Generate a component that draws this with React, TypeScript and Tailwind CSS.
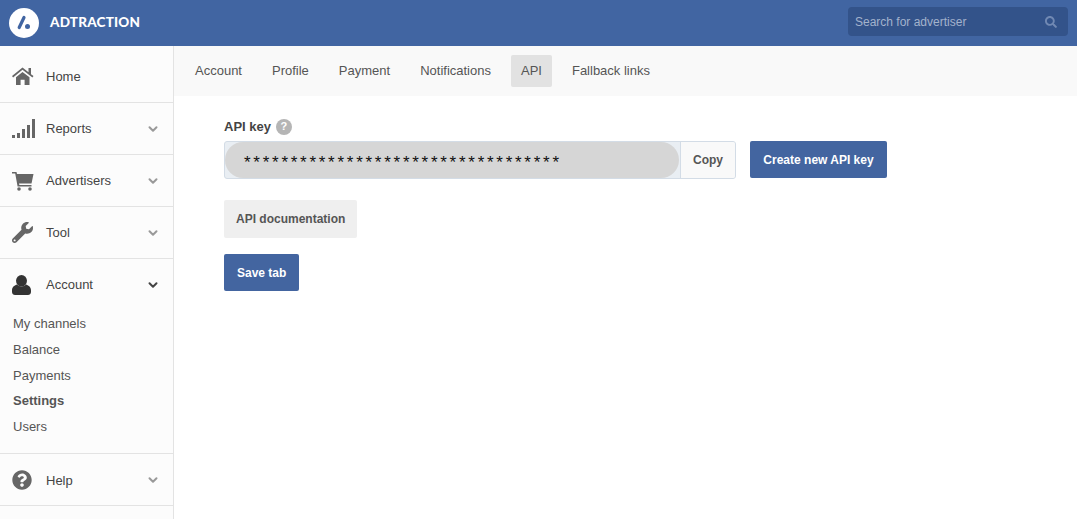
import { FaWrench, FaQuestionCircle, FaSearch } from "react-icons/fa";
import { ChevronDown } from "lucide-react";
import type { ReactNode } from "react";

function SignalIcon() {
  return (
    <svg width="23" height="20" viewBox="0 0 23 20" fill="#666">
      <rect x="0" y="16" width="3" height="3" />
      <rect x="5" y="14" width="3" height="5" />
      <rect x="10" y="10" width="3" height="9" />
      <rect x="15" y="6" width="3" height="13" />
      <rect x="20" y="0" width="3" height="19" />
    </svg>
  );
}

function HomeIcon() {
  return (
    <svg width="22" height="19" viewBox="0 0 22 19" fill="#666">
      <path d="M0 9 L10.5 0.5 L16.5 5.2 V1 H19 V7.2 L21.5 9 L20.4 10.4 L10.5 2.8 L1.1 10.4 Z" />
      <path d="M4 10.2 L10.5 5 L17.5 10.2 V18 H12.6 V12.8 H8.6 V18 H4 Z" />
    </svg>
  );
}

function CartIcon() {
  return (
    <svg width="22" height="20" viewBox="0 0 22 20" fill="#666">
      <path d="M0 1 H4.5 L5 3 H21.5 L19.5 12.5 H7 L7.4 14 H19.5 V15.6 H5.6 L3.2 2.6 H0 Z" />
      <circle cx="7" cy="18" r="1.8" />
      <circle cx="18" cy="18" r="1.8" />
    </svg>
  );
}

function UserIcon() {
  return (
    <svg width="19" height="20" viewBox="0 0 19 20" fill="#333">
      <ellipse cx="9.5" cy="5.8" rx="5.5" ry="5.8" />
      <path d="M0 15.5 C0 11.5 3 10.2 5 9.5 C7 12 12 12 14 9.5 C16 10.2 19 11.5 19 15.5 V17 C19 19 17.5 20 16 20 H3 C1.5 20 0 19 0 17 Z" />
    </svg>
  );
}

function NavRow({ icon, label, open, chevron = true, h }: { icon: ReactNode; label: string; open?: boolean; chevron?: boolean; h: string }) {
  return (
    <div className={`flex items-center ${h}`}>
      <div className="w-[46px] pl-3 flex items-center shrink-0">{icon}</div>
      <span className="text-[13px] text-[#444]">{label}</span>
      {chevron && (
        <ChevronDown
          size={14}
          strokeWidth={3.4}
          className={`ml-auto mr-[13px] ${open ? "text-[#444]" : "text-[#999]"}`}
        />
      )}
    </div>
  );
}

const tabs = ["Account", "Profile", "Payment", "Notifications", "API", "Fallback links"];
const subLinks = ["My channels", "Balance", "Payments", "Settings", "Users"];

export default function App() {
  return (
    <div className="h-[519px] overflow-hidden bg-white flex flex-col font-['Liberation_Sans',Arial,sans-serif]">
      {/* top bar */}
      <header className="h-[46px] shrink-0 bg-[#4165a2] flex items-center justify-between pl-[9px] pr-[9px]">
        <div className="flex items-center gap-[11px]">
          <div className="w-[30px] h-[30px] rounded-full bg-white flex items-center justify-center">
            <svg width="18" height="18" viewBox="0 0 18 18">
              <line x1="9" y1="3.5" x2="4.2" y2="13.5" stroke="#4165a2" strokeWidth="3.2" strokeLinecap="round" />
              <circle cx="12.5" cy="12.6" r="2.5" fill="#4165a2" />
            </svg>
          </div>
          <span className="text-white font-['Lato',sans-serif] font-black text-[13.5px] tracking-[0.2px] mb-[2px]">ADTRACTION</span>
        </div>
        <div className="w-[220px] h-[29px] mb-[3px] pt-[1px] rounded-[4px] bg-[#33538a] flex items-center justify-between pl-[7px] pr-[11px]">
          <span className="text-[12px] text-[#a3b2cc]">Search for advertiser</span>
          <FaSearch size={12} className="text-[#7189b3]" />
        </div>
      </header>

      <div className="flex flex-1 min-h-0">
        {/* sidebar */}
        <aside className="w-[174px] shrink-0 bg-[#fcfcfc] border-r border-[#e3e3e3]">
          <div className="border-b border-[#e3e3e3] pt-[5px]">
            <NavRow h="h-[51px]" icon={<HomeIcon />} label="Home" chevron={false} />
          </div>
          <div className="border-b border-[#e3e3e3]">
            <NavRow h="h-[51px]" icon={<SignalIcon />} label="Reports" />
          </div>
          <div className="border-b border-[#e3e3e3]">
            <NavRow h="h-[51px]" icon={<CartIcon />} label="Advertisers" />
          </div>
          <div className="border-b border-[#e3e3e3]">
            <NavRow h="h-[51px]" icon={<FaWrench size={21} color="#666" />} label="Tool" />
          </div>
          <div className="border-b border-[#e3e3e3] pb-[14px]">
            <NavRow h="h-[51px]" icon={<UserIcon />} label="Account" open />
            <ul className="pl-[13px] pt-[0.8px] -mb-[0.8px] flex flex-col">
              {subLinks.map((s) => (
                <li
                  key={s}
                  className={`h-[25.8px] flex items-center text-[13px] ${s === "Settings" ? "font-bold text-[#555]" : "text-[#555]"}`}
                >
                  {s}
                </li>
              ))}
            </ul>
          </div>
          <div className="border-b border-[#e3e3e3] pt-[2px]">
            <NavRow h="h-[49px]" icon={<FaQuestionCircle size={20} color="#666" />} label="Help" />
          </div>
        </aside>

        {/* main */}
        <main className="flex-1 min-w-0">
          <nav className="h-[50px] bg-[#f9f9f9] flex items-center pl-[11px] gap-[10px]">
            {tabs.map((t) => (
              <span
                key={t}
                className={`h-[32px] px-[10px] flex items-center rounded-[2px] text-[13px] text-[#555] ${t === "API" ? "bg-[#e2e2e2]" : ""}`}
              >
                {t}
              </span>
            ))}
          </nav>

          <div className="pl-[50px] pt-[21px]">
            <div className="flex items-center gap-[5px] h-[19px]">
              <span className="text-[13px] font-bold text-[#444]">API key</span>
              <span className="w-[16px] h-[16px] rounded-full bg-[#b5b5b5] text-white text-[11px] font-bold flex items-center justify-center">?</span>
            </div>

            <div className="flex items-start gap-[14px] mt-[5px]">
              <div className="w-[512px] h-[38px] flex rounded-[3px] border border-[#d3dce6] bg-[#e9eef3] overflow-hidden">
                <div className="flex-1 bg-[#d6d6d6] rounded-full flex items-center pl-[19px] pt-[6px] mr-[1px] text-[17px] text-[#111] tracking-[2.73px]">
                  **********************************
                </div>
                <div className="w-[55px] pb-[1px] border-l border-[#d3dce6] bg-[#f9f9f9] flex items-center justify-center text-[12px] font-bold text-[#555]">
                  Copy
                </div>
              </div>
              <button className="h-[37px] w-[137px] rounded-[2px] bg-[#4365a0] text-white text-[12px] font-bold">
                Create new API key
              </button>
            </div>

            <button className="block mt-[21px] h-[38px] px-[12px] rounded-[2px] bg-[#efefef] text-[#555] text-[12px] font-bold">
              API documentation
            </button>
            <button className="block mt-[16px] h-[37px] px-[13px] rounded-[2px] bg-[#4365a0] text-white text-[12px] font-bold">
              Save tab
            </button>
          </div>
        </main>
      </div>
    </div>
  );
}
